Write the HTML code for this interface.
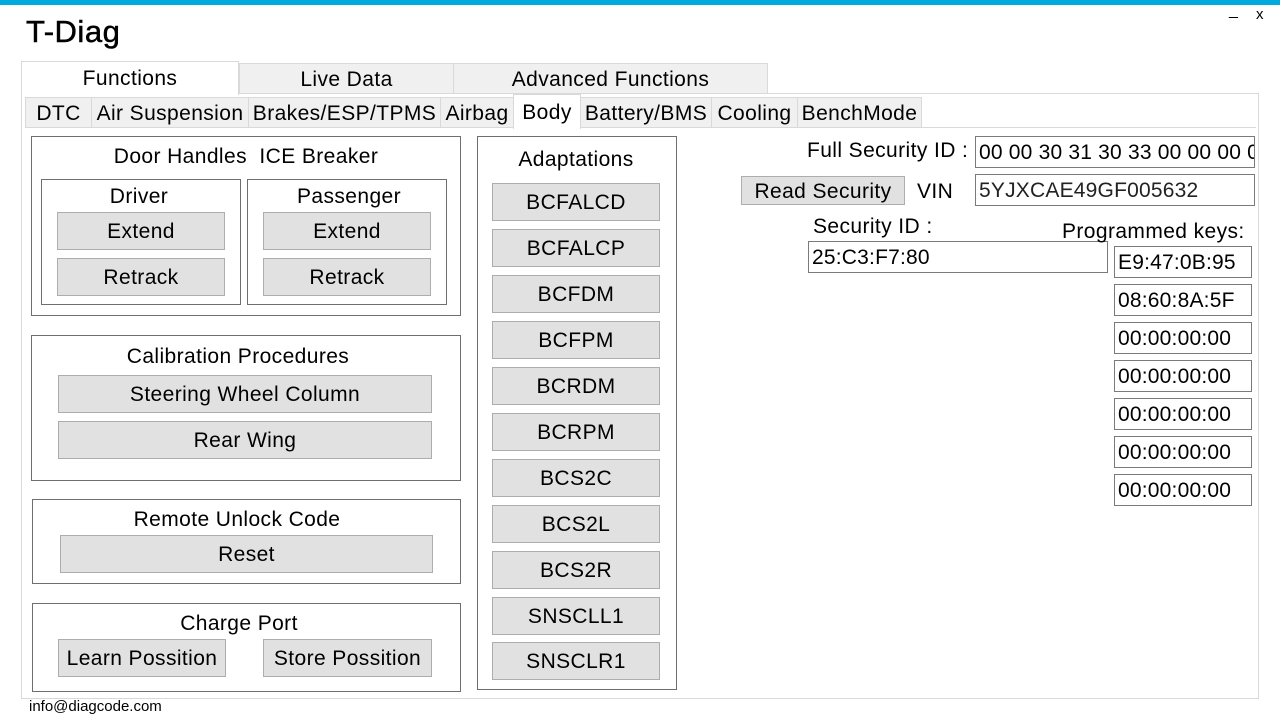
<!DOCTYPE html>
<html><head><meta charset="utf-8"><style>
*{margin:0;padding:0;box-sizing:border-box}
body{width:1280px;height:720px;background:#fff;position:relative;overflow:hidden;font-family:"Liberation Sans",sans-serif;color:#000;font-size:21px;letter-spacing:0.4px}
div,span{position:absolute}
.b{background:#e1e1e1;border:1px solid #adadad;display:flex;align-items:center;justify-content:center;padding-top:2px}
.g{border:1px solid #6e6e6e}
.t{white-space:nowrap}
.tb{border:1px solid #7a7a7a;background:#fff;padding-left:3px;padding-top:2px;display:flex;align-items:center;white-space:nowrap;overflow:hidden;letter-spacing:0.2px}
.tab{background:#f0f0f0;border:1px solid #d9d9d9;display:flex;align-items:center;justify-content:center;white-space:nowrap;padding-top:2px}
</style></head><body>
<div style="left:0;top:0;width:1280px;height:5px;background:#00aadd"></div>
<span class="t" style="left:26px;top:14px;font-size:31px;letter-spacing:0.5px;-webkit-text-stroke:0.5px #000">T-Diag</span>
<span class="t" style="left:1229px;top:2px;font-size:16px">_</span>
<span class="t" style="left:1256px;top:6px;font-size:15px">x</span>

<div style="left:21px;top:93px;width:1238px;height:606px;border:1px solid #d9d9d9;background:#fff"></div>
<div class="tab" style="left:239px;top:63px;width:215px;height:31px">Live Data</div>
<div class="tab" style="left:453px;top:63px;width:315px;height:31px">Advanced Functions</div>
<div style="left:21px;top:61px;width:218px;height:34px;border:1px solid #d9d9d9;border-bottom:none;background:#fff;display:flex;align-items:center;justify-content:center">Functions</div>

<div style="left:25px;top:127px;width:1231px;height:1px;background:#d9d9d9"></div>
<div class="tab" style="left:25px;top:97px;width:67px;height:31px">DTC</div>
<div class="tab" style="left:91px;top:97px;width:158px;height:31px">Air Suspension</div>
<div class="tab" style="left:248px;top:97px;width:193px;height:31px">Brakes/ESP/TPMS</div>
<div class="tab" style="left:440px;top:97px;width:74px;height:31px">Airbag</div>
<div class="tab" style="left:580px;top:97px;width:132px;height:31px">Battery/BMS</div>
<div class="tab" style="left:711px;top:97px;width:87px;height:31px">Cooling</div>
<div class="tab" style="left:797px;top:97px;width:125px;height:31px">BenchMode</div>
<div class="tab" style="left:513px;top:94px;width:68px;height:35px;background:#fff;border-bottom:none">Body</div>

<div class="g" style="left:31px;top:136px;width:430px;height:180px"></div>
<span class="t" style="left:31px;width:484px;text-align:center;top:145px;left:4px">Door Handles&nbsp; ICE Breaker</span>
<div class="g" style="left:41px;top:179px;width:200px;height:126px"></div>
<span class="t" style="left:41px;width:196px;text-align:center;top:185px">Driver</span>
<div class="g" style="left:247px;top:179px;width:200px;height:126px"></div>
<span class="t" style="left:247px;width:204px;text-align:center;top:185px">Passenger</span>
<div class="b" style="left:57px;top:212px;width:168px;height:38px">Extend</div>
<div class="b" style="left:57px;top:258px;width:168px;height:38px">Retrack</div>
<div class="b" style="left:263px;top:212px;width:168px;height:38px">Extend</div>
<div class="b" style="left:263px;top:258px;width:168px;height:38px">Retrack</div>

<div class="g" style="left:31px;top:335px;width:430px;height:146px"></div>
<span class="t" style="left:31px;width:414px;text-align:center;top:345px">Calibration Procedures</span>
<div class="b" style="left:58px;top:375px;width:374px;height:38px">Steering Wheel Column</div>
<div class="b" style="left:58px;top:421px;width:374px;height:38px">Rear Wing</div>

<div class="g" style="left:32px;top:499px;width:429px;height:85px"></div>
<span class="t" style="left:32px;width:410px;text-align:center;top:508px">Remote Unlock Code</span>
<div class="b" style="left:60px;top:535px;width:373px;height:38px">Reset</div>

<div class="g" style="left:32px;top:603px;width:429px;height:89px"></div>
<span class="t" style="left:32px;width:414px;text-align:center;top:612px">Charge Port</span>
<div class="b" style="left:58px;top:639px;width:168px;height:38px">Learn Possition</div>
<div class="b" style="left:263px;top:639px;width:169px;height:38px">Store Possition</div>

<div class="g" style="left:477px;top:136px;width:200px;height:554px"></div>
<span class="t" style="left:477px;width:198px;text-align:center;top:148px">Adaptations</span>
<div class="b" style="left:492px;top:183px;width:168px;height:38px">BCFALCD</div>
<div class="b" style="left:492px;top:229px;width:168px;height:38px">BCFALCP</div>
<div class="b" style="left:492px;top:275px;width:168px;height:38px">BCFDM</div>
<div class="b" style="left:492px;top:321px;width:168px;height:38px">BCFPM</div>
<div class="b" style="left:492px;top:367px;width:168px;height:38px">BCRDM</div>
<div class="b" style="left:492px;top:413px;width:168px;height:38px">BCRPM</div>
<div class="b" style="left:492px;top:459px;width:168px;height:38px">BCS2C</div>
<div class="b" style="left:492px;top:505px;width:168px;height:38px">BCS2L</div>
<div class="b" style="left:492px;top:551px;width:168px;height:38px">BCS2R</div>
<div class="b" style="left:492px;top:597px;width:168px;height:38px">SNSCLL1</div>
<div class="b" style="left:492px;top:642px;width:168px;height:38px">SNSCLR1</div>

<span class="t" style="left:807px;top:139px">Full Security ID :</span>
<div class="tb" style="left:975px;top:136px;width:280px;height:32px">00 00 30 31 30 33 00 00 00 00</div>
<div class="b" style="left:741px;top:176px;width:164px;height:29px;align-items:flex-end;padding-top:0">Read Security</div>
<span class="t" style="left:917px;top:180px">VIN</span>
<div class="tb" style="left:975px;top:174px;width:280px;height:32px;color:#222">5YJXCAE49GF005632</div>
<span class="t" style="left:813px;top:215px">Security ID :</span>
<div style="left:808px;top:241px;width:248px;height:1px;background:#7a7a7a"></div>
<div class="tb" style="left:808px;top:241px;width:300px;height:32px">25:C3:F7:80</div>
<span class="t" style="left:1062px;top:220px">Programmed keys:</span>
<div class="tb" style="left:1114px;top:246px;width:138px;height:32px">E9:47:0B:95</div>
<div class="tb" style="left:1114px;top:284px;width:138px;height:32px">08:60:8A:5F</div>
<div class="tb" style="left:1114px;top:322px;width:138px;height:32px">00:00:00:00</div>
<div class="tb" style="left:1114px;top:360px;width:138px;height:32px">00:00:00:00</div>
<div class="tb" style="left:1114px;top:398px;width:138px;height:32px">00:00:00:00</div>
<div class="tb" style="left:1114px;top:436px;width:138px;height:32px">00:00:00:00</div>
<div class="tb" style="left:1114px;top:474px;width:138px;height:32px">00:00:00:00</div>

<span class="t" style="left:29px;top:698px;font-size:15px;letter-spacing:0">info@diagcode.com</span>
</body></html>
